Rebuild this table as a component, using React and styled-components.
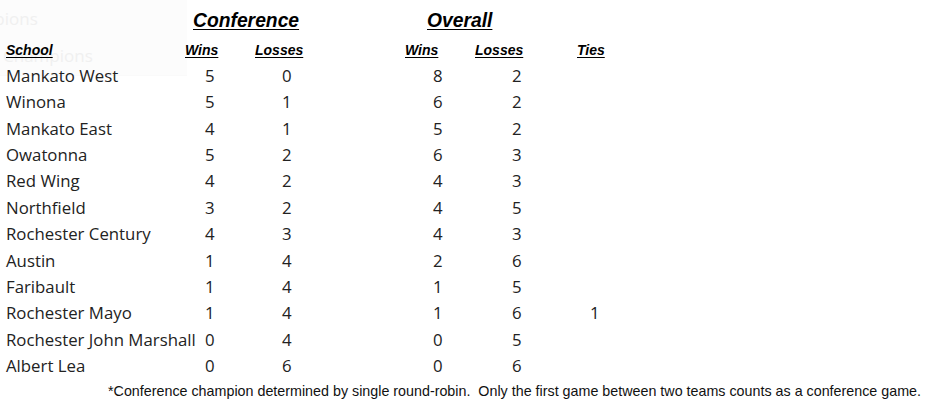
import React from 'react';
import styled, { createGlobalStyle } from 'styled-components';

const GlobalStyle = createGlobalStyle`
  html, body {
    margin: 0;
    padding: 0;
    background: #fff;
  }
  body {
    font-family: "Open Sans", "Liberation Sans", sans-serif;
    color: #222;
  }
`;

const Page = styled.div`
  position: relative;
  width: 934px;
  height: 410px;
  overflow: hidden;
`;

const Standings = styled.div`
  position: relative;
  z-index: 1;
  display: grid;
  grid-template-columns: 185px 70px 150px 70px 102px 1fr;
  grid-template-rows: 37px 26px;
  grid-auto-rows: 26.36px;
`;

const GroupTitle = styled.div`
  grid-column: ${(props) => props.$span};
  padding: 8px 0 3px ${(props) => props.$pad}px;
  font-family: "Liberation Sans", Arial, sans-serif;
  font-size: 19.3px;
  font-weight: bold;
  font-style: italic;
  line-height: 26px;
  color: #000;
  text-decoration: underline;
  text-underline-offset: 2px;
`;

const ColHead = styled.div`
  padding-left: ${(props) => props.$pad || 0}px;
  font-family: "Liberation Sans", Arial, sans-serif;
  font-size: 14px;
  font-weight: bold;
  font-style: italic;
  line-height: 26px;
  color: #000;
  text-decoration: underline;
  text-underline-offset: 2px;
`;

const SchoolCell = styled.div`
  padding-left: 6px;
  font-size: 16.8px;
  line-height: 26.36px;
  white-space: nowrap;
`;

const NumCell = styled.div`
  padding-left: ${(props) => props.$pad}px;
  font-size: 16.8px;
  line-height: 26.36px;
`;

const Footnote = styled.p`
  margin: 3px 0 0;
  padding-right: 13px;
  text-align: right;
  font-family: "Liberation Sans", Arial, sans-serif;
  font-size: 14.3px;
  line-height: 18px;
  color: #111;
  white-space: nowrap;
`;

/* faded-out menu panel sitting behind the top-left corner */
const GhostMenu = styled.div`
  position: absolute;
  left: 0;
  top: 0;
  width: 187px;
  height: 75px;
  background: #fcfcfc;
  box-shadow: 0 1px 1px rgba(0, 0, 0, 0.02);
  pointer-events: none;
`;

const GhostItem = styled.div`
  margin-left: ${(props) => props.$indent}px;
  font-size: 17px;
  line-height: 37px;
  color: #f0f0f0;
  white-space: nowrap;
`;

const columns = [
  { key: 'cw', label: 'Wins', pad: 20 },
  { key: 'cl', label: 'Losses', pad: 27 },
  { key: 'ow', label: 'Wins', pad: 28 },
  { key: 'ol', label: 'Losses', pad: 37 },
  { key: 'ties', label: 'Ties', pad: 13 },
];

const teams = [
  { name: 'Mankato West', cw: 5, cl: 0, ow: 8, ol: 2 },
  { name: 'Winona', cw: 5, cl: 1, ow: 6, ol: 2 },
  { name: 'Mankato East', cw: 4, cl: 1, ow: 5, ol: 2 },
  { name: 'Owatonna', cw: 5, cl: 2, ow: 6, ol: 3 },
  { name: 'Red Wing', cw: 4, cl: 2, ow: 4, ol: 3 },
  { name: 'Northfield', cw: 3, cl: 2, ow: 4, ol: 5 },
  { name: 'Rochester Century', cw: 4, cl: 3, ow: 4, ol: 3 },
  { name: 'Austin', cw: 1, cl: 4, ow: 2, ol: 6 },
  { name: 'Faribault', cw: 1, cl: 4, ow: 1, ol: 5 },
  { name: 'Rochester Mayo', cw: 1, cl: 4, ow: 1, ol: 6, ties: 1 },
  { name: 'Rochester John Marshall', cw: 0, cl: 4, ow: 0, ol: 5 },
  { name: 'Albert Lea', cw: 0, cl: 6, ow: 0, ol: 6 },
];

const App = () => {
  return (
    <Page>
      <GlobalStyle />
      <GhostMenu>
        <GhostItem $indent={-52}>Champions</GhostItem>
        <GhostItem $indent={3}>Champions</GhostItem>
      </GhostMenu>
      <Standings>
        <div />
        <GroupTitle $span="2 / 4" $pad={8}>Conference</GroupTitle>
        <GroupTitle $span="4 / 6" $pad={22}>Overall</GroupTitle>
        <div />

        <ColHead $pad={6}>School</ColHead>
        {columns.map((c) => (
          <ColHead key={c.key}>{c.label}</ColHead>
        ))}

        {teams.map((t) => (
          <React.Fragment key={t.name}>
            <SchoolCell>{t.name}</SchoolCell>
            {columns.map((c) => (
              <NumCell key={c.key} $pad={c.pad}>
                {t[c.key]}
              </NumCell>
            ))}
          </React.Fragment>
        ))}
      </Standings>
      <Footnote>
        *Conference champion determined by single round-robin.&nbsp; Only the first game between two teams counts as a conference game.
      </Footnote>
    </Page>
  );
};

export default App;
